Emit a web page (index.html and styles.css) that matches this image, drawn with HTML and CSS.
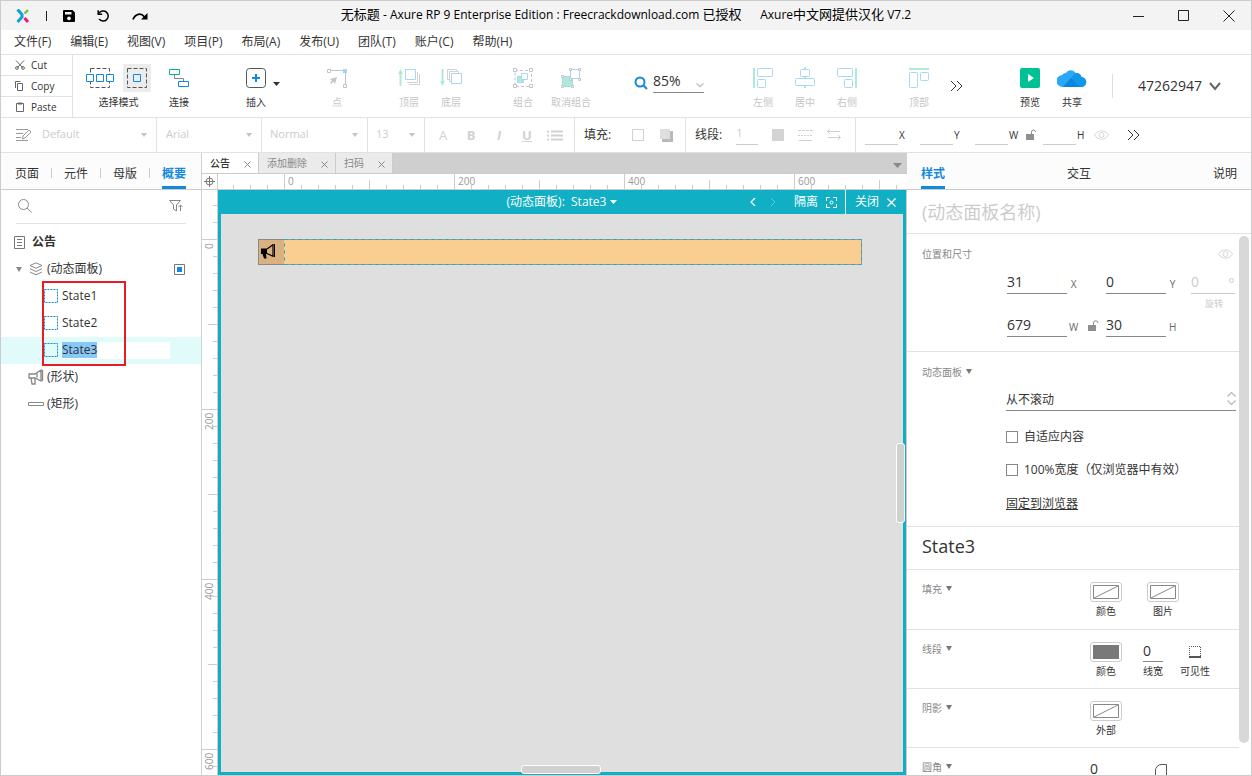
FILE: index.html
```html
<!DOCTYPE html>
<html lang="zh-CN">
<head>
<meta charset="utf-8">
<title>无标题 - Axure RP 9</title>
<link rel="stylesheet" href="styles.css">
</head>
<body>
<div class="app">
  <header class="titlebar">
    <div class="quick">
      <svg class="logo" width="14" height="14" viewBox="0 0 14 14" fill="none"><path d="M1.500.5 6 5.500V8L1.500 13" stroke="#0d9fdc" stroke-width="3"/><path d="M8.500 4.500 12 1" stroke="#72c047" stroke-width="2.400"/><path d="M8.500 9 12 13" stroke="#ee1a7c" stroke-width="3"/></svg>
      <span class="quick-line"></span>
      <button class="icon-btn" aria-label="保存"><svg width="12" height="12" viewBox="0 0 12 12"><path d="M1 0h8.500L12 2.500V11a1 1 0 0 1-1 1H1a1 1 0 0 1-1-1V1a1 1 0 0 1 1-1z" fill="#000"/><path d="M2 2h6.500v2.500H2z" fill="#f3f3f3"/><circle cx="6" cy="8.300" r="1.900" fill="#f3f3f3"/></svg></button>
      <button class="icon-btn" aria-label="撤销"><svg width="13" height="12" viewBox="0 0 13 12" fill="none" stroke="#000" stroke-width="1.500"><path d="M2 3.300A5 5 0 1 1 2.200 9"/><path d="M1.200.3v4h4"/></svg></button>
      <button class="icon-btn" aria-label="重做"><svg width="16" height="8" viewBox="0 0 16 8"><path d="M1 7.500C3.500 1.500 9 .5 12.500 5" fill="none" stroke="#000" stroke-width="1.800"/><path d="M15.500 1v6.500H9z" fill="#000"/></svg></button>
    </div>
    <h1 class="title"><span>无标题</span> - Axure RP 9 Enterprise Edition : Freecrackdownload.com <span>已授权</span> &nbsp; &nbsp; &nbsp;Axure<span>中文网提供汉化</span> V7.2</h1>
    <div class="window-btns">
      <button class="icon-btn" aria-label="最小化"><svg width="12" height="12"><path d="M0 6.500h11" stroke="#222"/></svg></button>
      <button class="icon-btn" aria-label="最大化"><svg width="12" height="12"><path d="M.5.5h10v10H.5z" fill="none" stroke="#222"/></svg></button>
      <button class="icon-btn" aria-label="关闭窗口"><svg width="12" height="12"><path d="m.5.5 11 11m0-11-11 11" stroke="#222"/></svg></button>
    </div>
  </header>

  <nav class="menubar">
    <button>文件(F)</button><button>编辑(E)</button><button>视图(V)</button><button>项目(P)</button><button>布局(A)</button><button>发布(U)</button><button>团队(T)</button><button>账户(C)</button><button>帮助(H)</button>
  </nav>

  <div class="toolbar">
    <div class="clipboard">
      <button><svg width="10" height="10" viewBox="0 0 10 10" fill="none" stroke="#666"><path d="m1 .5 6.500 7M9 .5l-6.500 7"/><circle cx="2" cy="8" r="1.400"/><circle cx="8" cy="8" r="1.400"/></svg>Cut</button>
      <button><svg width="10" height="10" viewBox="0 0 10 10" fill="none" stroke="#666"><path d="M2.500 2.500h5v7h-5zM.5 7V.5h5"/></svg>Copy</button>
      <button><svg width="10" height="10" viewBox="0 0 10 10" fill="none" stroke="#666"><path d="M1.500 1.500h7v8h-7z"/><path d="M3 1.500h4" stroke-width="2"/></svg>Paste</button>
    </div>
    <div class="mode">
      <div class="mode-icons">
        <button class="mode-btn" aria-label="相交选择"><svg width="28" height="28" fill="none"><path d="M4.500 4.500h19v19h-19z" stroke="#555" stroke-dasharray="4 2"/><path d="M.5 10.500h7v7h-7zM10.500 10.500h7v7h-7zM20.500 10.500h7v7h-7z" fill="#fff" stroke="#1389dc"/></svg></button>
        <button class="mode-btn on" aria-label="包含选择"><svg width="28" height="28" fill="none"><path d="M4.500 4.500h19v19h-19z" stroke="#555" stroke-dasharray="4 2"/><path d="M10.500 10.500h7v7h-7z" stroke="#1389dc"/></svg></button>
      </div>
      <span>选择模式</span>
    </div>
    <button class="tool connect"><svg width="20" height="28" fill="none"><path d="M5.500 10.500v4h9v3" stroke="#888"/><path d="M.5 5.500h10v5H.5z" stroke="#00b88b"/><path d="M9.500 17.500h10v5h-10z" stroke="#1389dc"/></svg>连接</button>
    <button class="tool insert"><svg width="20" height="28" fill="none"><rect x=".5" y="4.500" width="19" height="19" rx="3" stroke="#555"/><path d="M10 10v8M6 14h8" stroke="#1389dc" stroke-width="2"/></svg>插入</button>
    <button class="icon-btn caret-btn" aria-label="插入菜单"><svg width="7" height="4"><path d="M0 0h7L3.500 4z" fill="#333"/></svg></button>
    <button class="tool point" disabled><svg width="20" height="28" fill="none"><path d="M2 6.500h16.500v16" stroke="#c4c4c4"/><path d="M.5 5.500h3v3h-3zM16.500 20.500h3v3h-3z" fill="#fff" stroke="#c4c4c4"/><path d="M16 5h4v4h-4z" fill="#a4d4f4"/><path d="m10 13-2 7-1.500-2.500L4 20l-1-1 2-2.500L3 15z" fill="#c4c4c4"/></svg>点</button>
    <div class="tools">
      <button class="tool" disabled><svg width="22" height="28" fill="none"><path d="M2.500 22V9" stroke="#aee9da" stroke-width="2"/><path d="M0 10h5L2.500 5z" fill="#aee9da"/><path d="M11 20.500h10.500V10M9 18.500h10.500V8" stroke="#d2d2d2"/><path d="M7.500 5.500h10v10h-10z" stroke="#a9d6f3"/></svg>顶层</button>
      <button class="tool" disabled><svg width="22" height="28" fill="none"><path d="M2.500 5v13" stroke="#aee9da" stroke-width="2"/><path d="M0 17h5l-2.500 5z" fill="#aee9da"/><path d="M10 15.500H7.500v-10h9V8M12 17.500H9.500v-10h9V10" stroke="#d2d2d2"/><path d="M11.500 9.500h10v10h-10z" fill="#fff" stroke="#a9d6f3"/></svg>底层</button>
    </div>
    <div class="tools">
      <button class="tool" disabled><svg width="20" height="28" fill="none"><path d="M2 6.500h16.500v16H2z" stroke="#c4c4c4" stroke-dasharray="3 2"/><path d="M.5 4.500h3v3h-3zM16.500 4.500h3v3h-3zM.5 20.500h3v3h-3zM16.500 20.500h3v3h-3z" fill="#fff" stroke="#c4c4c4"/><path d="M4.500 12.500h6v6h-6z" fill="#aee9da" stroke="#a9d6f3"/><path d="M8.500 9.500h6v6h-6z" fill="#fff" stroke="#a9d6f3"/></svg>组合</button>
      <button class="tool ungroup" disabled><svg width="20" height="28" fill="none"><path d="M1.500 12.500h10v10h-10z" fill="#aee9da" stroke="#a9d6f3"/><path d="M9.500 5.500h9v9h-9z" fill="#fff" stroke="#a9d6f3"/><path d="M8.500 4.500h2v2h-2zM17.500 4.500h2v2h-2zM17.500 14.500h2v2h-2zM8.500 14.500h2v2h-2zM.5 11.500h2v2h-2zM.5 21.500h2v2h-2zM10.500 21.500h2v2h-2z" fill="#fff" stroke="#c4c4c4"/></svg>取消组合</button>
    </div>
    <label class="zoom"><svg width="14" height="14" fill="none" stroke="#1389dc" stroke-width="2"><circle cx="6" cy="6" r="4.500"/><path d="m9 9 4 4"/></svg>
      <span class="zoom-field"><select aria-label="缩放"><option>85%</option></select><svg width="8" height="5"><path d="m.5.5 3.500 3 3.500-3" fill="none" stroke="#c4c4c4" stroke-width="1.500"/></svg></span></label>
    <div class="tools align">
      <button class="tool" disabled><svg width="20" height="28" fill="none"><path d="M1 4v20" stroke="#aee9da" stroke-width="2"/><rect x="4.500" y="4.500" width="15" height="8" rx="1" stroke="#a9d6f3"/><rect x="4.500" y="15.500" width="8" height="8" rx="1" stroke="#a9d6f3"/></svg>左侧</button>
      <button class="tool" disabled><svg width="20" height="28" fill="none"><path d="M10 3v21" stroke="#aee9da" stroke-width="2"/><g fill="#fff" stroke="#a9d6f3"><rect x="5.500" y="5.500" width="9" height="7" rx="1"/><rect x=".5" y="14.500" width="19" height="7" rx="1"/></g></svg>居中</button>
      <button class="tool" disabled><svg width="20" height="28" fill="none"><path d="M19 4v20" stroke="#aee9da" stroke-width="2"/><rect x=".5" y="4.500" width="15" height="8" rx="1" stroke="#a9d6f3"/><rect x="7.500" y="15.500" width="8" height="8" rx="1" stroke="#a9d6f3"/></svg>右侧</button>
    </div>
    <div class="tools">
      <button class="tool" disabled><svg width="20" height="28" fill="none"><path d="M0 5h20" stroke="#aee9da" stroke-width="2"/><rect x=".5" y="8.500" width="8" height="15" rx="1" stroke="#a9d6f3"/><rect x="11.500" y="8.500" width="8" height="8" rx="1" stroke="#a9d6f3"/></svg>顶部</button>
    </div>
    <button class="icon-btn more" aria-label="更多工具"><svg width="13" height="12" fill="none" stroke="#333"><path d="m1 1 5 5-5 5M7 1l5 5-5 5"/></svg></button>
    <div class="account">
      <button class="tool"><svg width="20" height="28"><rect y="4" width="20" height="20" rx="2" fill="#00c196"/><path d="M8 10v8l6-4z" fill="#fff"/></svg>预览</button>
      <button class="tool"><svg width="30" height="28" fill="none"><path d="M6 23a6 6 0 0 1-1-12 5 5 0 0 1 4-2 5.500 5.500 0 0 1 9.500 0 5 5 0 0 1 6 4A5 5 0 0 1 24 23z" fill="#2aa7f7"/><path d="m6 23 12-13.500a5 5 0 0 1 6.500 3.500A5 5 0 0 1 24 23z" fill="#0f97ea"/><path d="m6 23 8-9 9 9z" fill="#0787dc"/></svg>共享</button>
      <span class="account-line"></span>
      <button class="user">47262947<svg width="12" height="9"><path d="m1 1 5 6 5-6" fill="none" stroke="#666" stroke-width="2"/></svg></button>
    </div>
  </div>

  <div class="formatbar">
    <div class="fmt fmt-style"><svg width="16" height="14" fill="none" stroke="#999"><path d="M0 1.500h12M0 5.500h7M0 9.500h5M0 12.500h12"/><path d="m6.500 11 .5-3 6-6 2 2-6 6z"/></svg><select aria-label="样式" disabled><option>Default</option></select><i class="caret"></i></div>
    <div class="fmt fmt-font"><select aria-label="字体" disabled><option>Arial</option></select><i class="caret"></i></div>
    <div class="fmt fmt-weight"><select aria-label="字重" disabled><option>Normal</option></select><i class="caret"></i></div>
    <div class="fmt fmt-size"><select aria-label="字号" disabled><option>13</option></select><i class="caret"></i></div>
    <div class="fmt fmt-text">
      <button class="letter" disabled>A</button><button class="letter bold" disabled>B</button><button class="letter bold italic" disabled>I</button><button class="letter bold under" disabled>U</button>
      <button class="letter" aria-label="列表" disabled><svg width="16" height="11"><path d="M0 1.500h2M0 5.500h2M0 9.500h2M4 1.500h12M4 5.500h12M4 9.500h12" stroke="#d2d2d2" stroke-width="2"/></svg></button>
    </div>
    <div class="fmt fmt-fill"><span>填充:</span>
      <button class="icon-btn" aria-label="填充颜色" disabled><svg width="12" height="12"><path d="M.5.5h11v11H.5z" fill="none" stroke="#d0d0d0"/></svg></button>
      <button class="icon-btn" aria-label="外部阴影" disabled><svg width="13" height="13"><path d="M2 2h11v11H2z" fill="#b9b9b9"/><path d="M0 0h10v10H0z" fill="#dedede"/></svg></button></div>
    <div class="fmt fmt-line"><span>线段:</span>
      <input class="line-width" aria-label="线宽" value="1" disabled>
      <button class="icon-btn" aria-label="线段颜色" disabled><svg width="12" height="12"><path d="M0 0h12v12H0z" fill="#d3d3d3"/></svg></button>
      <button class="icon-btn" aria-label="线型" disabled><svg width="15" height="12" stroke="#d0d0d0"><path d="M0 1.500h15" stroke-dasharray="3 1"/><path d="M0 6.500h15" stroke-dasharray="2 1"/><path d="M1 11.500h13"/></svg></button>
      <button class="icon-btn" aria-label="箭头" disabled><svg width="15" height="12" fill="none" stroke="#d0d0d0"><path d="M3 0 .5 2.500 3 5M.5 2.500H13M11 6l2.500 2.500L11 11M13.500 8.500H1"/></svg></button></div>
    <div class="coords">
      <label><input aria-label="X"><span>X</span></label>
      <label><input aria-label="Y"><span>Y</span></label>
      <label class="short"><input aria-label="W"><span>W</span></label>
      <svg class="bar-lock" width="10" height="12"><path d="M0 5h8v6H0z" fill="#8e8e8e"/><path d="M5.500 5V3a2 2 0 0 1 4 0" fill="none" stroke="#8e8e8e"/></svg>
      <label><input aria-label="H"><span>H</span></label>
      <button class="icon-btn bar-eye" aria-label="隐藏"><svg width="15" height="10" fill="none" stroke="#d6d6d6"><path d="M.5 5C4-.5 11-.5 14.500 5 11 10.500 4 10.500.5 5z"/><circle cx="7.500" cy="5" r="2.500"/></svg></button>
      <button class="icon-btn" aria-label="更多格式"><svg width="13" height="12" fill="none" stroke="#333"><path d="m1 1 5 5-5 5M7 1l5 5-5 5"/></svg></button>
    </div>
  </div>

  <main class="workspace">
    <aside class="outline">
      <div class="side-tabs"><button>页面</button><i></i><button>元件</button><i></i><button>母版</button><i></i><button class="active">概要</button></div>
      <div class="search"><svg width="14" height="14" fill="none" stroke="#888"><circle cx="5.500" cy="5.500" r="5"/><path d="m9 9 4.500 4.500"/></svg><input aria-label="搜索"><button class="icon-btn" aria-label="筛选"><svg width="14" height="12" fill="none" stroke="#888"><path d="M.5.500h11L7.500 5v6l-3-2V5zM11.500 11V5M9.500 7l2-2 2 2"/></svg></button></div>
      <div class="tree">
        <div class="row page"><svg width="11" height="13" fill="none" stroke="#777"><path d="M.5.500h10v12H.5zM3 3.500h5M3 6.500h5M3 9.500h5"/></svg><b>公告</b></div>
        <div class="row panel"><i class="open"></i><svg width="14" height="14" fill="none" stroke="#888"><path d="m7 .8 6 2.700-6 2.800-6-2.800zM1 6.700l6 2.800 6-2.800M1 10l6 2.800L13 10"/></svg><span>(动态面板)</span><button class="icon-btn view" aria-label="视图"><svg width="11" height="11"><path d="M.5.500h10v10H.5z" fill="#fff" stroke="#777"/><path d="M3 3h5v5H3z" fill="#1389dc"/></svg></button></div>
        <div class="states">
          <div class="row state"><svg width="14" height="14"><path d="M.5.500h13v13H.5z" fill="none" stroke="#1389dc" stroke-dasharray="2 1"/></svg><span>State1</span></div>
          <div class="row state"><svg width="14" height="14"><path d="M.5.500h13v13H.5z" fill="none" stroke="#1389dc" stroke-dasharray="2 1"/></svg><span>State2</span></div>
          <div class="row state selected"><svg width="14" height="14"><path d="M.5.500h13v13H.5z" fill="none" stroke="#1389dc" stroke-dasharray="2 1"/></svg><span class="rename"><mark>State3</mark></span></div>
          <div class="highlight-box"></div>
        </div>
        <div class="row shape"><svg width="16" height="17" fill="none" stroke="#888" stroke-width="1.300"><path d="M1 5h6l6-4v11L7 9H1zM3 9l1 6h3V9M9 4.500v4M14.500 1v11"/></svg><span>(形状)</span></div>
        <div class="row shape"><svg width="16" height="4"><path d="M.5.500h15v3H.5z" fill="none" stroke="#888"/></svg><span>(矩形)</span></div>
      </div>
    </aside>

    <section class="editor">
      <div class="doc-tabs">
        <div class="doc-tab current"><button>公告</button><button class="icon-btn" aria-label="关闭公告"><svg width="7" height="7"><path d="m.5.500 6 6m0-6-6 6" stroke="#888"/></svg></button></div>
        <div class="doc-tab"><button>添加删除</button><button class="icon-btn" aria-label="关闭添加删除"><svg width="7" height="7"><path d="m.5.500 6 6m0-6-6 6" stroke="#888"/></svg></button></div>
        <div class="doc-tab"><button>扫码</button><button class="icon-btn" aria-label="关闭扫码"><svg width="7" height="7"><path d="m.5.500 6 6m0-6-6 6" stroke="#888"/></svg></button></div>
        <button class="icon-btn tab-list" aria-label="标签列表"><svg width="9" height="5"><path d="M0 0h9L4.500 5z" fill="#888"/></svg></button>
      </div>
      <div class="corner"><svg width="11" height="11" fill="none" stroke="#777"><circle cx="5.500" cy="5.500" r="3.500"/><path d="M5.500 0v11M0 5.500h11"/></svg></div>
      <div class="ruler-x"><span>0</span><span>200</span><span>400</span><span>600</span></div>
      <div class="ruler-y"><span>0</span><span>200</span><span>400</span><span>600</span></div>
      <div class="stage">
        <div class="stage-head">
          <button class="state-name">(动态面板): &nbsp;State3<svg width="7" height="4"><path d="M0 0h7L3.500 4z" fill="#fff"/></svg></button>
          <div class="stage-actions">
            <button class="icon-btn" aria-label="上一个状态"><svg width="6" height="8" fill="none" stroke="#fff" stroke-width="1.300"><path d="M5 0 1 4l4 4"/></svg></button>
            <button class="icon-btn next" aria-label="下一个状态"><svg width="6" height="8" fill="none" stroke="#5ccbd8"><path d="m1 0 4 4-4 4"/></svg></button>
            <button class="isolate">隔离<svg width="11" height="11" fill="none" stroke="#fff"><path d="M.5 4V.5H4M7 .5h3.500V4M10.500 7v3.500H7M4 10.500H.5V7"/><circle cx="5.500" cy="5.500" r="1.500"/></svg></button>
            <button class="close">关闭<svg width="9" height="9"><path d="m.5.500 8 8m0-8-8 8" stroke="#fff" stroke-width="1.300"/></svg></button>
          </div>
        </div>
        <div class="canvas">
          <div class="notice">
            <span class="notice-icon"><svg width="14" height="15"><path d="M0 4.500h6V10H5l.5 4.500H3L1.500 10H0z" fill="#000"/><path d="m6 5 6-4.300v11.600L6 9.500" fill="none" stroke="#000" stroke-width="1.200"/><path d="M13.500 0v13" stroke="#000"/></svg></span>
            <svg class="notice-body" width="578" height="26"><path d="M0 0h578v26H0z" fill="#facd91"/><path d="M0 .5h577.500v25H0" fill="none" stroke="#999"/><path d="M.5.500h577v25H.5z" fill="none" stroke="#10afc3" stroke-dasharray="3 4"/></svg>
          </div>
          <span class="scroll-v"></span><span class="scroll-h"></span>
        </div>
      </div>
    </section>

    <aside class="inspector">
      <div class="insp-tabs"><button class="active">样式</button><button>交互</button><button>说明</button></div>
      <div class="name-row"><input aria-label="名称" placeholder="(动态面板名称)"></div>
      <div class="insp-body">
        <section class="sec geometry">
          <div class="sec-head"><h2>位置和尺寸</h2><button class="icon-btn" aria-label="可见"><svg width="15" height="10" fill="none" stroke="#d6d6d6"><path d="M.5 5C4-.5 11-.5 14.500 5 11 10.500 4 10.500.5 5z"/><circle cx="7.500" cy="5" r="2.500"/></svg></button></div>
          <div class="geo">
            <label><input value="31"><span>X</span></label><i></i><label><input value="0"><span>Y</span></label>
            <label class="rotate"><span class="deg"><input value="0" disabled><em></em></span><small>旋转</small></label>
            <label><input value="679"><span>W</span></label><svg width="11" height="12"><path d="M0 5h8v6H0z" fill="#8e8e8e"/><path d="M5.500 5V3a2.200 2.200 0 0 1 4.500 0" fill="none" stroke="#8e8e8e"/></svg><label><input value="30"><span>H</span></label>
          </div>
        </section>
        <section class="sec dynamic">
          <div class="sec-head"><h2>动态面板<i class="tri"></i></h2></div>
          <div class="dyn-body">
            <div class="scroll-select"><select aria-label="滚动条"><option>从不滚动</option></select><svg width="9" height="13" fill="none" stroke="#bbb" stroke-width="1.300"><path d="m.5 4.500 4-4 4 4M.5 8.500l4 4 4-4"/></svg></div>
            <label><input type="checkbox">自适应内容</label>
            <label><input type="checkbox">100%宽度（仅浏览器中有效）</label>
            <a href="#pin">固定到浏览器</a>
          </div>
        </section>
        <h2 class="state-title">State3</h2>
        <section class="sec props"><h2>填充<i class="tri"></i></h2>
          <button class="prop color"><span class="swatch"><svg width="26" height="14"><path d="M.5.500h25v13H.5zM1 13 25 1" fill="none" stroke="#888"/></svg></span>颜色</button>
          <button class="prop image"><span class="swatch"><svg width="26" height="14"><path d="M.5.500h25v13H.5zM1 13 25 1" fill="none" stroke="#888"/></svg></span>图片</button></section>
        <section class="sec props"><h2>线段<i class="tri"></i></h2>
          <button class="prop color"><span class="swatch"><svg width="26" height="14"><path d="M0 0h26v14H0z" fill="#797979"/></svg></span>颜色</button>
          <label class="prop stroke"><input value="0">线宽</label>
          <button class="prop visible"><svg width="12" height="20"><path d="M.5 15V4.500h11V15" fill="none" stroke="#555" stroke-dasharray="1 1"/><path d="M0 15h12" stroke="#555" stroke-width="2"/></svg>可见性</button></section>
        <section class="sec props"><h2>阴影<i class="tri"></i></h2>
          <button class="prop color"><span class="swatch"><svg width="26" height="14"><path d="M.5.500h25v13H.5zM1 13 25 1" fill="none" stroke="#888"/></svg></span>外部</button></section>
        <section class="sec props corner-row"><h2>圆角<i class="tri"></i></h2>
          <label class="prop radius"><input aria-label="圆角半径" value="0"></label>
          <button class="icon-btn radius-btn" aria-label="圆角可见性"><svg width="12" height="12"><path d="M.5 12V7A6 6 0 0 1 7 .5h4.500V12" fill="none" stroke="#555"/></svg></button></section>
      </div>
      <span class="insp-scroll"></span>
    </aside>
  </main>
</div>
</body>
</html>
```
FILE: styles.css
```css
* { box-sizing: border-box; }
body { margin: 0; font: 12px/16px "Open Sans", "Noto Sans CJK SC", sans-serif; color: #333; background: #fff; }
button, input, select { font: inherit; color: inherit; border: 0; padding: 0; margin: 0; background: none; border-radius: 0; outline: 0; min-width: 0; }
button { white-space: nowrap; flex: none; }
select { appearance: none; opacity: 1; }
svg { display: block; flex: none; }
h1, h2 { margin: 0; font-weight: 400; font-size: 12px; }
.icon-btn { display: flex; }
.app { height: 100vh; border: 1px solid #ccc; display: flex; flex-direction: column; overflow: hidden; }

.titlebar { height: 29px; background: #f3f3f3; display: grid; grid-template-columns: 1fr auto 1fr; align-items: center; flex: none; }
.quick { display: flex; align-items: center; padding-left: 15px; }
.quick-line { width: 1px; height: 10px; background: #222; margin: 0 16px; }
.quick .icon-btn { margin-right: 22px; }
.title { color: #000; white-space: nowrap; padding-bottom: 2px; }
.title span { font-size: 13px; }
.window-btns { display: flex; justify-content: flex-end; gap: 33px; padding-right: 16px; }

.menubar { height: 25px; flex: none; display: flex; align-items: center; gap: 19px; padding: 0 13px; border-bottom: 1px solid #e2e2e2; }

.toolbar { height: 63px; flex: none; display: flex; border-bottom: 1px solid #e2e2e2; font-size: 10px; line-height: 12px; }
.clipboard { width: 72px; border-right: 1px solid #e2e2e2; display: flex; flex-direction: column; }
.clipboard button { flex: 1; display: flex; align-items: center; gap: 6px; padding-left: 14px; }
.clipboard button + button { border-top: 1px solid #e2e2e2; }
.mode { margin-left: 13px; padding-top: 9px; display: flex; flex-direction: column; align-items: center; gap: 4px; }
.mode-icons { display: flex; gap: 9px; }
.mode-btn.on { background: #ececec; }
.tool { width: 42px; padding-top: 9px; display: flex; flex-direction: column; align-items: center; gap: 4px; color: #333; }
.tool:disabled { color: #c6c6c6; }
.connect { margin-left: 7px; }
.insert { margin-left: 39px; width: 34px; }
.caret-btn { align-items: center; padding-top: 5px; margin-bottom: 9px; }
.point { margin-left: 36px; }
.tools { display: flex; margin-left: 30px; }
.ungroup { width: 54px; }
.zoom { display: flex; gap: 5px; margin: 17px 0 0 36px; height: 21px; align-items: center; font-size: 14px; line-height: 18px; }
.zoom-field { display: flex; align-items: center; height: 21px; border-bottom: 1px solid #888; padding-bottom: 2px; width: 51px; }
.zoom-field select { flex: 1; }
.zoom-field svg { margin-top: 8px; }
.align { margin-left: 38px; }
.more { margin: 0 0 0 10px; align-items: center; }
.account { margin-left: auto; display: flex; padding-right: 30px; }
.account-line { width: 1px; height: 24px; background: #ddd; margin: 19px 25px 0 19px; }
.user { display: flex; align-items: center; gap: 7px; font-size: 14px; }
.account svg { margin: 0; }

.formatbar { height: 35px; flex: none; display: flex; border-bottom: 1px solid #e2e2e2; }
.fmt { display: flex; align-items: center; border-right: 1px solid #e2e2e2; color: #ccc; font-size: 11px; padding: 0 9px; flex: none; }
.fmt select { flex: 1; padding-bottom: 2px; }
.caret { border: 3px solid transparent; border-top: 4px solid #c4c4c4; border-bottom: 0; }
.fmt-style { width: 156px; gap: 10px; padding-left: 15px; }
.fmt-font { width: 105px; }
.fmt-weight { width: 106px; padding-left: 8px; }
.fmt-size { width: 57px; padding-left: 8px; }
.fmt-text { width: 150px; padding: 0 4px; }
.letter { width: 28px; font-size: 13px; display: flex; justify-content: center; color: #d2d2d2; }
.bold { font-weight: 700; }
.italic { font-style: italic; }
.under { text-decoration: underline; }
.fmt-fill { width: 111px; }
.fmt-fill span, .fmt-line span { color: #333; font-size: 12px; }
.fmt-fill span { margin-right: auto; }
.fmt-fill .icon-btn { margin-right: 3px; margin-left: 13px; }
.fmt-line { width: 170px; gap: 14px; }
.line-width { width: 22px; height: 20px; border-bottom: 1px solid #ccc; padding-bottom: 4px; }
.coords { display: flex; align-items: center; padding-left: 9px; font-size: 10px; line-height: 14px; }
.coords label { display: flex; align-items: center; gap: 1px; width: 55px; }
.coords label:nth-of-type(4) { width: 51px; }
.coords .short { width: 51px; }
.coords input { width: 33px; height: 20px; border-bottom: 1px solid #ccc; }
.bar-lock { margin-right: 7px; }
.bar-eye { margin-right: 18px; }

.workspace { flex: 1; min-height: 0; display: grid; grid-template: minmax(0, 1fr) / 201px minmax(0, 1fr) 344px; }
.outline { border-right: 1px solid #d0d0d0; }
.side-tabs { height: 37px; background: #fcfcfc; border-bottom: 1px solid #ccc; display: flex; justify-content: space-between; align-items: center; padding: 4px 15px 0 14px; }
.side-tabs i { width: 1px; height: 10px; background: #ccc; }
.side-tabs button, .insp-tabs button { height: 32px; border-bottom: 3px solid transparent; padding-top: 4px; }
.side-tabs .active, .insp-tabs .active { color: #1389dc; font-weight: 700; border-bottom: 3px solid #1389dc; }
.search { height: 34px; margin: 0 15px; border-bottom: 1px solid #e2e2e2; display: flex; align-items: center; padding: 0 3px 2px 2px; }
.search input { flex: 1; }
.tree { padding-top: 5px; }
.row { height: 27px; display: flex; align-items: center; padding-bottom: 1px; }
.page { padding-left: 13px; gap: 7px; }
.panel { padding-left: 15px; padding-right: 16px; gap: 4px; }
.panel svg { margin-left: 3px; }
.open { border: 3px solid transparent; border-top: 5px solid #888; border-bottom: 0; width: 6px; }
.view { margin-left: auto; }
.states { position: relative; font-size: 12px; }
.highlight-box { position: absolute; left: 41px; right: 75px; top: -2px; bottom: -2px; border: 2px solid #e71c24; }
.state { padding-left: 43px; gap: 4px; }
.selected { background: #e1fafa; }
.rename { background: #fff; height: 17px; width: 108px; line-height: 16px; }
.rename mark { background: #86c8f8; color: inherit; display: inline-block; }
.shape { padding-left: 27px; gap: 3px; }

.editor { display: grid; grid-template: 21px 16px minmax(0, 1fr) / 16px minmax(0, 1fr); }
.doc-tabs { grid-column: 1 / 3; background: #cfcfcf; display: flex; font-size: 10px; color: #888; border-bottom: 1px solid #ccc; }
.doc-tab { background: #ebebeb; display: flex; align-items: center; gap: 14px; padding: 0 7px 0 8px; border-right: 1px solid #ccc; }
.doc-tab .icon-btn { padding-top: 2px; }
.doc-tab.current { background: #fff; color: #333; font-weight: 500; }
.tab-list { margin-left: auto; padding: 10px 5px 0 0; }
.corner { border-right: 1px solid #ccc; border-bottom: 1px solid #ccc; display: flex; align-items: center; justify-content: center; }
.ruler-x, .ruler-y { display: flex; overflow: hidden; font-size: 10px; line-height: 14px; color: #999; background-repeat: repeat-x; }
.ruler-x { padding-left: 66px; border-bottom: 1px solid #ccc;
  background-image: linear-gradient(to right, #ccc 1px, transparent 1px), linear-gradient(to right, #ccc 1px, transparent 1px), linear-gradient(to right, #ccc 1px, transparent 1px);
  background-size: 17px 4px, 170px 9px, 170px 15px; background-position: 15px 100%, 151px 100%, 66px 100%; }
.ruler-x span { flex: 0 0 170px; padding-left: 4px; }
.ruler-y { flex-direction: column; padding-top: 49px; border-right: 1px solid #ccc; background-repeat: repeat-y;
  background-image: linear-gradient(#ccc 1px, transparent 1px), linear-gradient(#ccc 1px, transparent 1px), linear-gradient(#ccc 1px, transparent 1px);
  background-size: 4px 17px, 9px 170px, 15px 170px; background-position: 100% 15px, 100% 134px, 100% 49px; }
.ruler-y span { flex: 0 0 170px; writing-mode: vertical-rl; transform: rotate(180deg); text-align: right; padding-bottom: 4px; width: 14px; }
.stage { background: #10afc3; padding: 0 3px 3px; border-right: 1px solid #ccc; display: flex; flex-direction: column; }
.stage-head { height: 24px; color: #fff; display: grid; grid-template-columns: 1fr auto 1fr; }
.state-name { grid-column: 2; display: flex; align-items: center; gap: 4px; }
.stage-actions { display: flex; justify-content: flex-end; align-items: center; }
.next { margin: 0 18px 0 14px; }
.isolate { display: flex; align-items: center; gap: 8px; padding-right: 8px; }
.close { display: flex; align-items: center; gap: 8px; height: 24px; border-left: 1px solid #fff; padding: 0 7px 0 9px; }
.canvas { flex: 1; background: #dfdfdf; position: relative; }
.notice { position: absolute; left: 37px; top: 25px; display: flex; }
.notice-icon { width: 26px; height: 26px; background: #dbb180; border: 1px solid #888; border-right: 0; padding: 4px 0 0 2px; }
.scroll-v, .scroll-h { position: absolute; background: #d0d0d0; border: 1px solid #fff; border-radius: 3px; }
.scroll-v { right: -2px; top: 41%; width: 9px; height: 80px; }
.scroll-h { bottom: -2px; left: 44%; width: 80px; height: 9px; }

.inspector { position: relative; display: flex; flex-direction: column; min-height: 0; }
.insp-tabs { height: 37px; flex: none; background: #fcfcfc; border-bottom: 1px solid #ccc; display: flex; justify-content: space-between; padding: 4px 14px 0; }
.name-row { height: 44px; flex: none; border-bottom: 1px solid #e2e2e2; padding: 0 15px; display: flex; }
.name-row input { flex: 1; font-size: 18px; }
.name-row input::placeholder { color: #ccc; opacity: 1; }
.insp-body { flex: 1; min-height: 0; overflow: hidden; }
.sec { border-bottom: 1px solid #e2e2e2; margin-right: 12px; padding: 13px 0 0 15px; }
.sec h2 { font-size: 10px; line-height: 14px; color: #888; display: flex; gap: 4px; }
.tri { border: 3px solid transparent; border-top: 5px solid #777; border-bottom: 0; height: 5px; margin-top: 4px; }
.sec-head { display: flex; justify-content: space-between; }
.geometry { height: 118px; }
.sec-head .icon-btn { margin: 2px 6px 0 0; }
.geo { display: grid; grid-template-columns: 71px 28px 71px 1fr; padding: 11px 0 0 85px; row-gap: 22px; align-items: center; }
.geo label { display: flex; align-items: center; height: 21px; font-size: 10px; }
.geo label > span:not(.deg) { padding: 2px 0 0 2px; width: 11px; text-align: center; color: #666; }
.geo input { width: 61px; height: 23px; border-bottom: 1px solid #888; font-size: 14px; padding-bottom: 2px; }
.geo svg { margin-left: 10px; }
.geo .rotate { flex-direction: column; align-items: flex-start; margin-left: 14px; color: #ccc; }
.deg { display: flex; flex: none; border-bottom: 1px solid #ccc; width: 44px; }
.deg input { width: 38px; height: 21px; border: 0; }
.deg em { width: 5px; height: 5px; border: 1px solid #ccc; border-radius: 3px; margin-top: 6px; }
.rotate small { font-size: 9px; line-height: 14px; padding: 3px 0 0 14px; }
.dynamic { height: 175px; }
.dyn-body { padding-left: 84px; display: flex; flex-direction: column; align-items: flex-start; }
.scroll-select { width: 100%; max-width: 230px; display: flex; align-items: center; height: 24px; margin-top: 8px; border-bottom: 1px solid #888; }
.scroll-select select { flex: 1; padding-top: 2px; }
.dyn-body label { display: flex; align-items: center; gap: 6px; height: 16px; margin-top: 17px; }
.dyn-body label:first-of-type { margin-top: 18px; }
.dyn-body input { appearance: none; width: 12px; height: 12px; border: 1px solid #888; }
.dyn-body a { color: inherit; margin-top: 18px; }
.state-title { height: 43px; margin-right: 12px; border-bottom: 1px solid #e2e2e2; padding: 8px 15px 0; font-size: 18px; line-height: 22px; }
.props { height: 59px; display: flex; padding-top: 12px; }
.state-title + .props { height: 60px; }
.props > h2 { width: 168px; height: 14px; }
.prop { display: flex; flex-direction: column; align-items: center; font-size: 10px; line-height: 12px; gap: 3px; align-self: flex-start; }
.swatch { width: 32px; height: 20px; border: 1px solid #ccc; border-radius: 3px; padding: 2px; }
.image { margin-left: 25px; }
.stroke { margin-left: 21px; }
.prop input { width: 20px; height: 20px; font-size: 14px; border-bottom: 1px solid #888; padding-bottom: 2px; }
.visible { margin-left: 17px; }
.corner-row { border: 0; }
.radius-btn { margin: 4px 0 0 45px; }
.insp-scroll { position: absolute; right: 2px; top: 83px; bottom: 32px; width: 10px; border-radius: 5px; background: #d8d8d8; }
```
